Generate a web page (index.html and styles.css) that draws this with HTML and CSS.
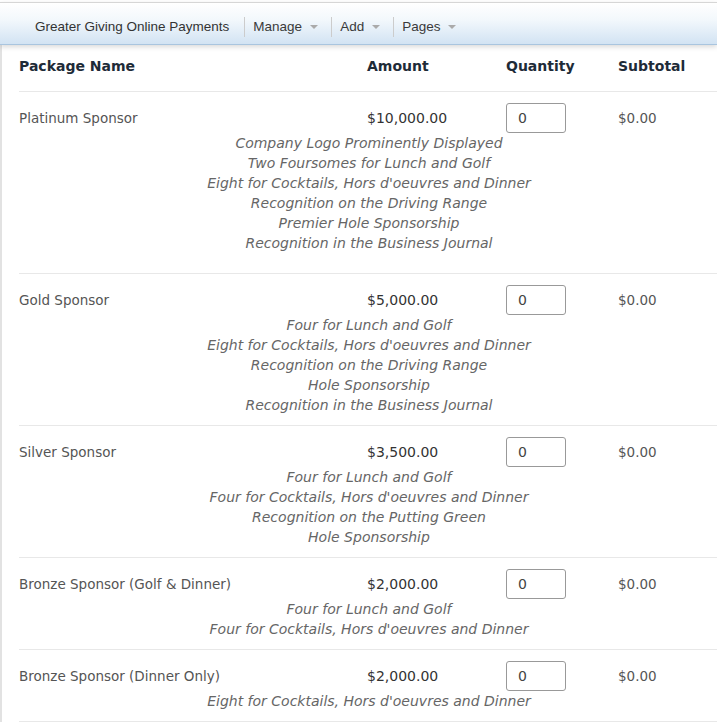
FILE: index.html
```html
<!DOCTYPE html>
<html lang="en">
<head>
    <meta charset="UTF-8">
    <meta name="viewport" content="width=device-width, initial-scale=1.0">
    <title>Greater Giving Online Payments</title>
    <link rel="stylesheet" href="styles.css">
</head>
<body>
    <div class="navbar">
        <span class="brand">Greater Giving Online Payments</span>
        <span class="nav-item">Manage <span class="caret"></span></span>
        <span class="nav-item">Add <span class="caret"></span></span>
        <span class="nav-item">Pages <span class="caret"></span></span>
    </div>

    <div class="content">
        <div class="row head">
            <div>Package Name</div>
            <div>Amount</div>
            <div>Quantity</div>
            <div>Subtotal</div>
        </div>

        <div class="package package-tall">
            <div class="row">
                <div class="name">Platinum Sponsor</div>
                <div class="amount">$10,000.00</div>
                <div><input type="text" class="qty" value="0"></div>
                <div class="subtotal">$0.00</div>
            </div>
            <div class="desc">
                Company Logo Prominently Displayed<br>
                Two Foursomes for Lunch and Golf<br>
                Eight for Cocktails, Hors d'oeuvres and Dinner<br>
                Recognition on the Driving Range<br>
                Premier Hole Sponsorship<br>
                Recognition in the Business Journal
            </div>
        </div>

        <div class="package">
            <div class="row">
                <div class="name">Gold Sponsor</div>
                <div class="amount">$5,000.00</div>
                <div><input type="text" class="qty" value="0"></div>
                <div class="subtotal">$0.00</div>
            </div>
            <div class="desc">
                Four for Lunch and Golf<br>
                Eight for Cocktails, Hors d'oeuvres and Dinner<br>
                Recognition on the Driving Range<br>
                Hole Sponsorship<br>
                Recognition in the Business Journal
            </div>
        </div>

        <div class="package">
            <div class="row">
                <div class="name">Silver Sponsor</div>
                <div class="amount">$3,500.00</div>
                <div><input type="text" class="qty" value="0"></div>
                <div class="subtotal">$0.00</div>
            </div>
            <div class="desc">
                Four for Lunch and Golf<br>
                Four for Cocktails, Hors d'oeuvres and Dinner<br>
                Recognition on the Putting Green<br>
                Hole Sponsorship
            </div>
        </div>

        <div class="package">
            <div class="row">
                <div class="name">Bronze Sponsor (Golf &amp; Dinner)</div>
                <div class="amount">$2,000.00</div>
                <div><input type="text" class="qty" value="0"></div>
                <div class="subtotal">$0.00</div>
            </div>
            <div class="desc">
                Four for Lunch and Golf<br>
                Four for Cocktails, Hors d'oeuvres and Dinner
            </div>
        </div>

        <div class="package">
            <div class="row">
                <div class="name">Bronze Sponsor (Dinner Only)</div>
                <div class="amount">$2,000.00</div>
                <div><input type="text" class="qty" value="0"></div>
                <div class="subtotal">$0.00</div>
            </div>
            <div class="desc">
                Eight for Cocktails, Hors d'oeuvres and Dinner
            </div>
        </div>
    </div>
</body>
</html>
```

FILE: styles.css
```css
body {
    margin: 0;
    padding-top: 2px;
    background-color: #fff;
    font-family: "DejaVu Sans", Verdana, sans-serif;
}

.navbar {
    box-sizing: border-box;
    height: 43px;
    display: flex;
    align-items: center;
    padding: 6px 0 0 35px;
    border-top: 1px solid #d6d6d6;
    border-bottom: 1px solid #a9c5df;
    background: linear-gradient(to bottom, #ffffff 0%, #f3f8fc 40%, #d2e3f3 100%);
    box-shadow: 0 2px 5px rgba(0, 0, 0, 0.15);
    font-family: "Liberation Sans", Arial, sans-serif;
    font-size: 13.5px;
    color: #3a3a3a;
    position: relative;
}

.brand {
    color: #333;
    padding-right: 15px;
}

.nav-item {
    display: flex;
    align-items: center;
    height: 20px;
    padding: 0 13px 0 8px;
    border-left: 1px solid #ccc;
}

.caret {
    display: inline-block;
    margin-left: 8px;
    margin-top: 1px;
    border-left: 4px solid transparent;
    border-right: 4px solid transparent;
    border-top: 4px solid #aaa;
}

.content {
    border-left: 2px solid #e2e2e2;
    padding-left: 17px;
}

.row {
    display: grid;
    grid-template-columns: 348px 139px 112px 1fr;
    align-items: center;
}

.head {
    padding: 11px 0 15px;
    line-height: 20px;
    font-weight: bold;
    font-size: 14px;
    color: #1e2b38;
    border-bottom: 1px solid #e8e8e8;
}

.package {
    padding: 11px 0 10px;
    border-bottom: 1px solid #e8e8e8;
}

.package-tall {
    padding-bottom: 20px;
}

.name {
    font-size: 13.5px;
    color: #555;
}

.amount {
    font-size: 14px;
    color: #333;
}

.subtotal {
    font-size: 13.5px;
    color: #555;
}

.qty {
    box-sizing: border-box;
    width: 60px;
    height: 30px;
    padding: 0 11px;
    border: 1px solid #999;
    border-radius: 3px;
    font-family: "DejaVu Sans", Verdana, sans-serif;
    font-size: 14px;
    color: #444;
    margin: 0;
}

.desc {
    text-align: center;
    font-style: italic;
    font-size: 14px;
    line-height: 20px;
    color: #666;
    padding-left: 2px;
}
```
